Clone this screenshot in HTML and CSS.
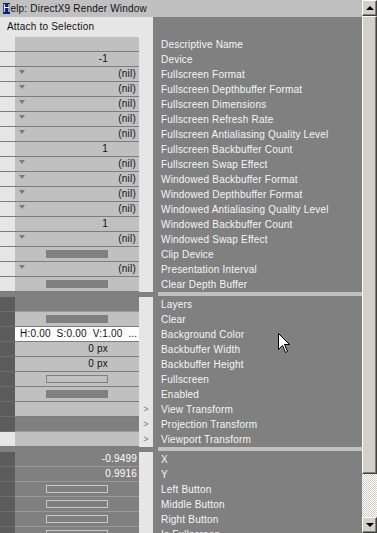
FILE: index.html
```html
<!DOCTYPE html>
<html>
<head>
    <meta charset="utf-8">
    <link rel="stylesheet" href="styles.css">
    <title>Help: DirectX9 Render Window</title>
</head>
<body>
<div class="window">
    <div class="main">
        <div class="titlebar"><span class="caret">H</span>elp: DirectX9 Render Window</div>
        <div class="head">
            <div class="attach">Attach to Selection</div>
            <div class="head-panel"></div>
        </div>

        <div class="row"><div class="side"></div><div class="val"></div><div class="btn"></div><div class="lab">Descriptive Name</div></div>
        <div class="row"><div class="side"></div><div class="val num">-1</div><div class="btn"></div><div class="lab">Device</div></div>
        <div class="row"><div class="side"></div><div class="val nil"><i class="tri"></i>(nil)</div><div class="btn"></div><div class="lab">Fullscreen Format</div></div>
        <div class="row"><div class="side"></div><div class="val nil"><i class="tri"></i>(nil)</div><div class="btn"></div><div class="lab">Fullscreen Depthbuffer Format</div></div>
        <div class="row"><div class="side"></div><div class="val nil"><i class="tri"></i>(nil)</div><div class="btn"></div><div class="lab">Fullscreen Dimensions</div></div>
        <div class="row"><div class="side"></div><div class="val nil"><i class="tri"></i>(nil)</div><div class="btn"></div><div class="lab">Fullscreen Refresh Rate</div></div>
        <div class="row"><div class="side"></div><div class="val nil"><i class="tri"></i>(nil)</div><div class="btn"></div><div class="lab">Fullscreen Antialiasing Quality Level</div></div>
        <div class="row"><div class="side"></div><div class="val num">1</div><div class="btn"></div><div class="lab">Fullscreen Backbuffer Count</div></div>
        <div class="row"><div class="side"></div><div class="val nil"><i class="tri"></i>(nil)</div><div class="btn"></div><div class="lab">Fullscreen Swap Effect</div></div>
        <div class="row"><div class="side"></div><div class="val nil"><i class="tri"></i>(nil)</div><div class="btn"></div><div class="lab">Windowed Backbuffer Format</div></div>
        <div class="row"><div class="side"></div><div class="val nil"><i class="tri"></i>(nil)</div><div class="btn"></div><div class="lab">Windowed Depthbuffer Format</div></div>
        <div class="row"><div class="side"></div><div class="val nil"><i class="tri"></i>(nil)</div><div class="btn"></div><div class="lab">Windowed Antialiasing Quality Level</div></div>
        <div class="row"><div class="side"></div><div class="val num">1</div><div class="btn"></div><div class="lab">Windowed Backbuffer Count</div></div>
        <div class="row"><div class="side"></div><div class="val nil"><i class="tri"></i>(nil)</div><div class="btn"></div><div class="lab">Windowed Swap Effect</div></div>
        <div class="row"><div class="side"></div><div class="val ctr"><i class="bar"></i></div><div class="btn"></div><div class="lab">Clip Device</div></div>
        <div class="row"><div class="side"></div><div class="val nil"><i class="tri"></i>(nil)</div><div class="btn"></div><div class="lab">Presentation Interval</div></div>
        <div class="row"><div class="side"></div><div class="val ctr"><i class="bar"></i></div><div class="btn"></div><div class="lab">Clear Depth Buffer</div></div>

        <div class="sep"><div class="sep-left"></div><div class="sep-right"><div class="sep-bar"></div></div></div>

        <div class="row low dark"><div class="side"></div><div class="val"></div><div class="btn"></div><div class="lab">Layers</div></div>
        <div class="row low"><div class="side"></div><div class="val ctr"><i class="bar"></i></div><div class="btn"></div><div class="lab">Clear</div></div>
        <div class="row low"><div class="side"></div><div class="val color">H:0.00&nbsp; S:0.00&nbsp; V:1.00&nbsp; ...</div><div class="btn"></div><div class="lab">Background Color</div></div>
        <div class="row low"><div class="side"></div><div class="val num">0 px</div><div class="btn"></div><div class="lab">Backbuffer Width</div></div>
        <div class="row low"><div class="side"></div><div class="val num">0 px</div><div class="btn"></div><div class="lab">Backbuffer Height</div></div>
        <div class="row low"><div class="side"></div><div class="val ctr"><i class="box"></i></div><div class="btn"></div><div class="lab">Fullscreen</div></div>
        <div class="row low"><div class="side"></div><div class="val ctr"><i class="bar"></i></div><div class="btn"></div><div class="lab">Enabled</div></div>
        <div class="row low"><div class="side"></div><div class="val"></div><div class="btn more">&gt;</div><div class="lab">View Transform</div></div>
        <div class="row low dark"><div class="side"></div><div class="val"></div><div class="btn more">&gt;</div><div class="lab">Projection Transform</div></div>
        <div class="row"><div class="side"></div><div class="val"></div><div class="btn more">&gt;</div><div class="lab">Viewport Transform</div></div>

        <div class="sep"><div class="sep-left"></div><div class="sep-right"><div class="sep-bar"></div></div></div>

        <div class="row low dark"><div class="side"></div><div class="val float">-0.9499</div><div class="btn"></div><div class="lab">X</div></div>
        <div class="row low dark"><div class="side"></div><div class="val float">0.9916</div><div class="btn"></div><div class="lab">Y</div></div>
        <div class="row low dark"><div class="side"></div><div class="val ctr"><i class="box"></i></div><div class="btn"></div><div class="lab">Left Button</div></div>
        <div class="row low dark"><div class="side"></div><div class="val ctr"><i class="box"></i></div><div class="btn"></div><div class="lab">Middle Button</div></div>
        <div class="row low dark"><div class="side"></div><div class="val ctr"><i class="box"></i></div><div class="btn"></div><div class="lab">Right Button</div></div>
        <div class="row low dark"><div class="side"></div><div class="val ctr"><i class="box"></i></div><div class="btn"></div><div class="lab">Is Fullscreen</div></div>
    </div>

    <div class="scrollbar">
        <div class="sb-btn"><i class="arrow-up"></i></div>
        <div class="sb-thumb"></div>
        <div class="sb-track"></div>
        <div class="sb-btn"><i class="arrow-down"></i></div>
    </div>

    <svg class="cursor" width="13" height="21" viewBox="0 0 13 21">
        <path d="M0.5 0.5 L0.5 16.5 L4.5 12.5 L7.5 19.5 L9.5 18.5 L6.5 11.5 L11.5 11.5 Z" fill="#fff" stroke="#000" stroke-width="1"/>
    </svg>
</div>
</body>
</html>
```

FILE: styles.css
```css
body {
    margin: 0;
    background: #808080;
    font-family: "Liberation Sans", Arial, sans-serif;
    font-size: 10px;
    letter-spacing: 0.2px;
}

.window {
    position: relative;
    display: grid;
    grid-template-columns: 362px 15px;
    width: 377px;
    height: 533px;
    overflow: hidden;
}

.main {
    overflow: hidden;
    background: #808080;
}

.titlebar {
    height: 17px;
    line-height: 17px;
    padding-left: 3px;
    background: #c0c0c0;
    color: #111;
    white-space: nowrap;
}

.caret {
    background: #0a246a;
    color: #fff;
}

.head {
    display: grid;
    grid-template-columns: 153px 1fr;
    height: 20px;
}

.attach {
    background: #e6e6e6;
    padding-left: 7px;
    line-height: 20px;
    color: #111;
}

.head-panel {
    background: #808080;
}

/* property rows */
.row {
    display: grid;
    grid-template-columns: 15px 124px 14px 1fr;
    height: 15px;
}

.side,
.val {
    height: 14px;
    border-bottom: 1px solid #7c7c7c;
}

.side {
    background: #e6e6e6;
}

.val {
    display: flex;
    align-items: center;
    justify-content: flex-end;
    background: #c0c0c0;
    color: #111;
    line-height: 14px;
    white-space: nowrap;
}

.btn {
    background: #e6e6e6;
}

.lab {
    background: #808080;
    color: #f6f6f6;
    padding-left: 8px;
    line-height: 15px;
    white-space: nowrap;
}

.val.num {
    padding-right: 31px;
}

.val.nil {
    justify-content: space-between;
    padding: 0 3px 0 4px;
}

.val.ctr {
    justify-content: center;
}

.val.color {
    justify-content: flex-start;
    padding-left: 5px;
    background: #fff;
}

.val.float {
    padding-right: 2px;
}

.tri {
    width: 0;
    height: 0;
    margin-top: -4px;
    border-left: 3px solid transparent;
    border-right: 3px solid transparent;
    border-top: 4px solid #7a7a7a;
}

.bar {
    width: 62px;
    height: 8px;
    background: #808080;
}

.box {
    width: 60px;
    height: 6px;
    border: 1px solid #808080;
}

.more {
    color: #777;
    text-align: center;
    line-height: 15px;
    font-size: 9px;
}

/* lower group */
.low .side {
    background: #5c5c5c;
    border-bottom-color: #6e6e6e;
}

.dark .val {
    background: #808080;
    color: #fff;
    border-bottom-color: #9a9a9a;
}

.dark .box {
    border-color: #c8c8c8;
}

.sep {
    display: grid;
    grid-template-columns: 153px 1fr;
    height: 5px;
}

.sep-left {
    background: #808080;
}

.sep-right {
    padding: 0 0 1px 5px;
}

.sep-bar {
    height: 4px;
    background: #c0c0c0;
}

/* scrollbar */
.scrollbar {
    display: flex;
    flex-direction: column;
    background: #d4d0c8;
}

.sb-btn,
.sb-thumb {
    box-sizing: border-box;
    border: 1px solid;
    border-color: #fff #404040 #404040 #fff;
    background: #d4d0c8;
    box-shadow: inset -1px -1px #808080;
}

.sb-btn {
    display: flex;
    align-items: center;
    justify-content: center;
    height: 16px;
}

.sb-thumb {
    height: 458px;
}

.sb-track {
    flex: 1;
    background: repeating-conic-gradient(#fff 0 25%, #d4d0c8 0 50%) 0 0 / 2px 2px;
}

.arrow-up,
.arrow-down {
    width: 0;
    height: 0;
    border-left: 4px solid transparent;
    border-right: 4px solid transparent;
}

.arrow-up {
    border-bottom: 4px solid #000;
}

.arrow-down {
    border-top: 4px solid #000;
}

.cursor {
    position: absolute;
    left: 278px;
    top: 333px;
}
```
